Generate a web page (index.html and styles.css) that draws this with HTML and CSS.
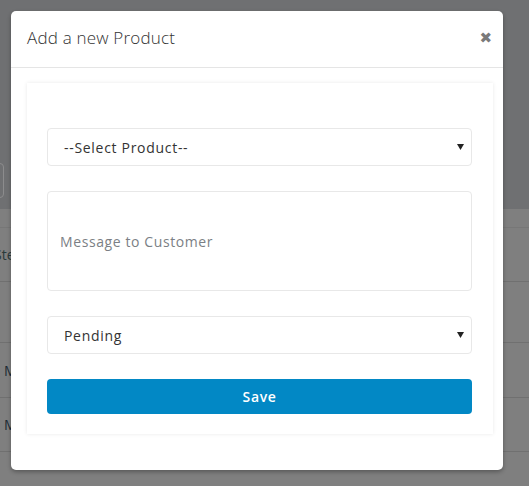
FILE: index.html
```html
<!DOCTYPE html>
<html>
<head>
<meta charset="utf-8">
<link rel="stylesheet" href="styles.css">
</head>
<body>
<div class="page">
  <div class="page-top">
    <div class="ghost-input"></div>
  </div>
  <div class="page-rows">
    <div class="row row-thin"></div>
    <div class="row row-head"><span class="cell-text">Ste</span></div>
    <div class="row row-a"></div>
    <div class="row row-b"><span class="cell-text">M</span></div>
    <div class="row row-b"><span class="cell-text">M</span></div>
  </div>
</div>

<div class="modal">
  <div class="modal-header">
    <h4 class="modal-title">Add a new Product</h4>
    <span class="modal-close">&#x2716;</span>
  </div>
  <div class="modal-body">
    <div class="card">
      <div class="field select">
        <span>--Select Product--</span>
        <svg class="caret" width="7" height="6" viewBox="0 0 7 6"><path d="M0 0H7L3.5 6Z" fill="#222"/></svg>
      </div>
      <div class="field textarea">
        <span class="placeholder">Message to Customer</span>
      </div>
      <div class="field select">
        <span>Pending</span>
        <svg class="caret" width="7" height="6" viewBox="0 0 7 6"><path d="M0 0H7L3.5 6Z" fill="#222"/></svg>
      </div>
      <button class="btn-save">Save</button>
    </div>
  </div>
</div>
</body>
</html>
```

FILE: styles.css
```css
html, body {
  margin: 0;
  padding: 0;
}
body {
  width: 529px;
  height: 486px;
  overflow: hidden;
  background: #7f7f7f;
  font-family: "Open Sans", "Noto Sans", sans-serif;
  position: relative;
}
.page-top {
  height: 209px;
  background: #6f7072;
  display: flex;
  flex-direction: column;
}
.ghost-input {
  margin-top: 163px;
  margin-left: -40px;
  width: 42px;
  height: 33px;
  border: 1px solid #8c8c8d;
  border-radius: 4px;
}
.page-rows {
  display: flex;
  flex-direction: column;
}
.row {
  border-bottom: 1px solid #707070;
  display: flex;
  align-items: center;
  box-sizing: border-box;
}
.row-thin { height: 19px; border-bottom-color: #777; }
.row-head { height: 54px; }
.row-a { height: 61px; }
.row-b { height: 55px; }
.row-b + .row-b { height: 54px; }
.cell-text {
  font-size: 14px;
  color: #1b2a33;
}
.row-head .cell-text { margin-left: -6px; color: #2a3a3a; }
.row-b .cell-text { margin-left: 4px; }

.modal {
  position: absolute;
  left: 11px;
  top: 11px;
  width: 492px;
  height: 459px;
  background: #fff;
  border-radius: 5px;
  box-shadow: 0 2px 4px rgba(0,0,0,0.3);
  box-sizing: border-box;
  display: flex;
  flex-direction: column;
}
.modal-header {
  height: 57px;
  box-sizing: border-box;
  border-bottom: 1px solid #e5e5e5;
  display: flex;
  align-items: center;
  justify-content: space-between;
  padding: 0 11px 3px 16px;
}
.modal-title {
  margin: 0;
  font-weight: 300;
  font-size: 17px;
  color: #333;
  letter-spacing: 0.2px;
}
.modal-close {
  font-size: 15px;
  color: #7a7a7a;
  font-family: "DejaVu Sans", sans-serif;
  margin-top: 0;
}
.modal-body {
  padding: 15px 10px 36px 16px;
}
.card {
  background: #fff;
  box-shadow: 0 0 4px rgba(0,0,0,0.09);
  padding: 45px 21px 20px 20px;
  display: flex;
  flex-direction: column;
  gap: 25px;
}
.field {
  border: 1px solid #e8e8e8;
  border-radius: 4px;
  box-sizing: border-box;
  display: flex;
  align-items: center;
}
.select {
  height: 38px;
  padding: 0 7px 0 16px;
  justify-content: space-between;
  font-size: 14px;
  color: #333;
  letter-spacing: 0.7px;
}
.caret {
  margin-top: -1px;
}
.textarea {
  height: 100px;
  padding: 0 12px;
}
.placeholder {
  font-size: 14px;
  color: #7b7f85;
  letter-spacing: 0.6px;
}
.btn-save {
  height: 35px;
  border: none;
  border-radius: 4px;
  background: #0288c5;
  color: #fff;
  font-family: "Open Sans", sans-serif;
  font-size: 14px;
  font-weight: 600;
  letter-spacing: 0.6px;
}
```
